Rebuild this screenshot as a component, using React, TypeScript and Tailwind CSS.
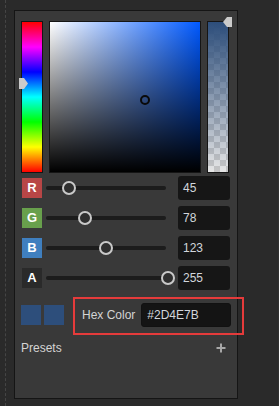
import React from "react";

const CHANNELS = [
  { key: "R", value: 45, box: "bg-[#b84646]" },
  { key: "G", value: 78, box: "bg-[#68a04c]" },
  { key: "B", value: 123, box: "bg-[#3f7fbf]" },
  { key: "A", value: 255, box: "bg-[#2a2a2a]" },
];

function ChannelRow({ label, value, box }: { label: string; value: number; box: string }) {
  return (
    <div className="flex items-center h-[24px]">
      <div className={`${box} ml-[1px] w-[20px] h-[20px] flex items-center justify-center text-white text-[13px] font-bold`}>
        {label}
      </div>
      {/* slider */}
      <div className="relative ml-[4px] w-[120px] h-[14px] flex items-center">
        <div className="w-full h-[4px] rounded-full bg-[#1c1c1c]" />
        <div
          className="absolute top-0 w-[14px] h-[14px] rounded-full border-2 border-[#c9c9c9] bg-[#2f2f2f]"
          style={{ left: 2 + (value / 255) * 120 - 7 }}
        />
      </div>
      <div className="ml-[12px] w-[52px] h-[24px] rounded-[3px] bg-[#161616] flex items-center pl-[5px] text-[12px] text-[#d2d6dc]">
        {value}
      </div>
    </div>
  );
}

export default function App() {
  return (
    <div
      className="w-[279px] h-[406px] bg-[#2a2a2a] flex border-r border-[#303030] overflow-hidden"
      style={{ fontFamily: '"Liberation Sans", Arial, sans-serif' }}
    >
      {/* left gutter with dashed guide */}
      <div className="w-[14px] h-full pl-[5px]">
        <div className="h-full border-l border-dashed border-[#454545]" />
      </div>

      <div className="mt-[10px] w-[224px] h-[389px] border border-[#151515] bg-[#393939] pt-[10px] pl-[6px] flex flex-col">
        {/* pickers */}
        <div className="flex gap-[6px] h-[152px]">
          <div className="relative w-[22px] h-full border border-[#151515] bg-[linear-gradient(to_bottom,#f00,#f0f,#00f,#0ff,#0f0,#ff0,#f00)]">
            <svg className="absolute left-[-3px] top-[56px]" width="10" height="11" viewBox="0 0 10 11">
              <polygon points="0,0 5,0 9,5.5 5,11 0,11" fill="#cbcbcb" />
            </svg>
          </div>
          <div className="relative w-[152px] h-full border border-[#151515] bg-[linear-gradient(to_top,#000,transparent),linear-gradient(to_right,#fff,#0059ff)]">
            <div className="absolute left-[90px] top-[73px] w-[10px] h-[10px] rounded-full border-2 border-[#0a0a0a]" />
          </div>
          <div className="relative w-[22px] h-full border border-[#151515] bg-[repeating-conic-gradient(#c6c6c6_0%_25%,#e6e6e6_0%_50%)] bg-size-[12px_12px]">
            <div className="w-full h-full bg-linear-to-b from-[#2D4E7B] to-[#2D4E7B00]" />
            <svg className="absolute left-[15px] top-[-5px]" width="9" height="10" viewBox="0 0 9 10">
              <polygon points="0,5 4,0 9,0 9,10 4,10" fill="#cbcbcb" />
            </svg>
          </div>
        </div>

        {/* channel rows */}
        <div className="mt-[3px] flex flex-col gap-[6px]">
          {CHANNELS.map((c) => (
            <ChannelRow key={c.key} label={c.key} value={c.value} box={c.box} />
          ))}
        </div>

        {/* swatches + hex */}
        <div className="mt-[13px] h-[24px] flex items-center">
          <div className="w-[20px] h-[20px] bg-[#2D4E7B]" />
          <div className="ml-[3px] w-[20px] h-[20px] bg-[#2D4E7B]" />
          <div className="relative ml-[18px] flex items-center">
            <span className="text-[12px] text-[#d4d4d4]">Hex Color</span>
            <div className="ml-[6px] w-[90px] h-[24px] rounded-[3px] bg-[#141414] border border-[#111] flex items-center pl-[5px] text-[12px] text-[#d2d6dc]">
              #2D4E7B
            </div>
            <div className="absolute left-[-9px] top-[-6px] w-[171px] h-[38px] border-2 border-[#e53b3b]" />
          </div>
        </div>

        {/* presets */}
        <div className="mt-[14px] flex items-center justify-between pr-[11px] h-[14px]">
          <span className="text-[12px] text-[#d4d4d4]">Presets</span>
          <svg width="10" height="10" viewBox="0 0 10 10">
            <path d="M5 0.5v9M0.5 5h9" stroke="#a8a8a8" strokeWidth="2" />
          </svg>
        </div>
      </div>
    </div>
  );
}
